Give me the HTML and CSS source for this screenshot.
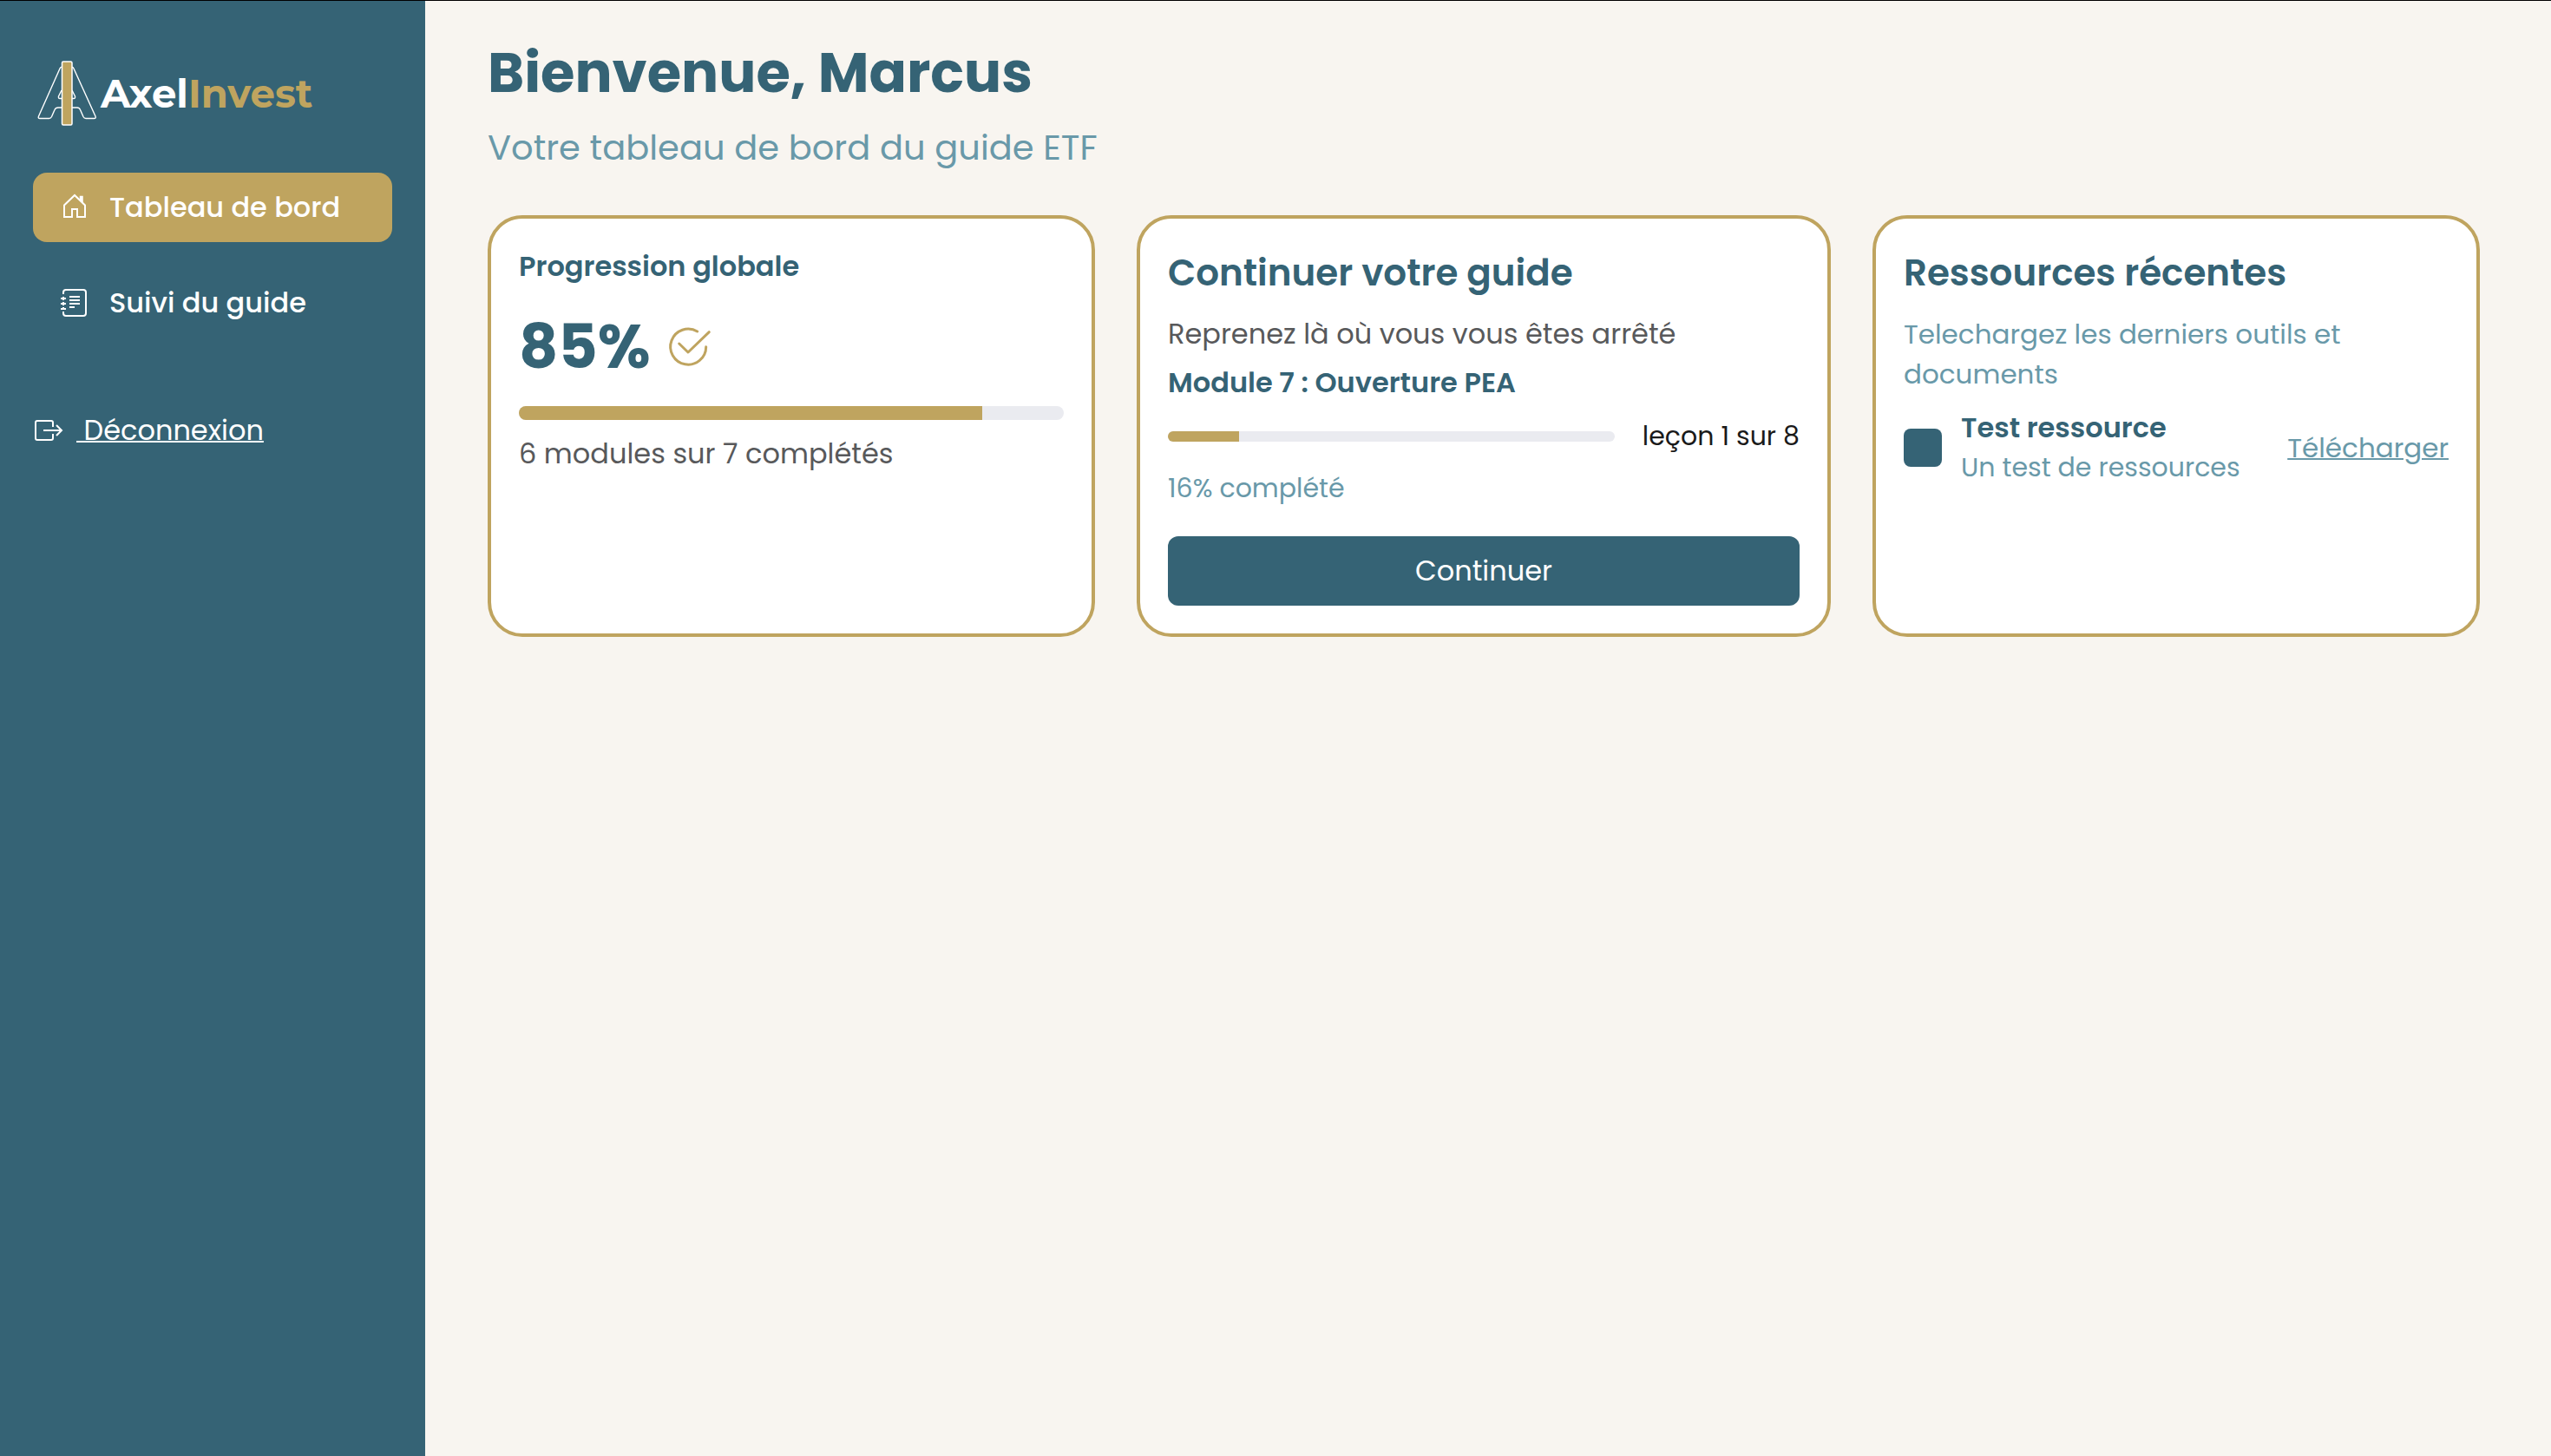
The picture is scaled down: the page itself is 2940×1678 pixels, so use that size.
FILE: index.html
```html
<!DOCTYPE html>
<html lang="fr">
<head>
  <meta charset="utf-8">
  <meta name="viewport" content="width=device-width, initial-scale=1">
  <title>AxelInvest</title>
  <link rel="stylesheet" href="styles.css">
</head>
<body>
  <div class="app">
    <aside class="sidebar">
      <a class="logo" href="#">
        <svg class="logo-mark" viewBox="0 0 72 78" fill="none" aria-hidden="true">
          <g stroke="#fff" stroke-width="1.4" stroke-linejoin="round">
            <path d="M29 8.500Q28 8 27 10L2.500 65Q1.500 67.500 4 67.500H14.500Q16.500 67.500 17.500 65.500L21 57.500Q22 55 25 55H47Q49.500 55 50.500 57.500L54 65.500Q55 67.500 57 67.500H66.500Q69 67.500 68 65L43 10Q42 8 41 8.500"/>
            <path d="M29 35L25.500 42Q25 44.500 27 44.500H43Q45 44.500 44.500 42L41 35"/>
          </g>
          <rect x="29.500" y="2" width="11.500" height="73" rx="1.500" fill="#bfa45f" stroke="#fff" stroke-width="1.500"/>
        </svg>
        <span class="logo-text">Axel<span class="logo-accent">Invest</span></span>
      </a>
      <nav class="nav">
        <a class="nav-item nav-item-active" href="#">
          <svg class="icon" viewBox="0 0 32 32" fill="none" stroke="#fff" stroke-width="2" aria-hidden="true">
            <path d="M4 27V13.500L16 2L28 13.500V27H19V18H13V27Z"/>
            <path d="M22.500 3.500H25V10L22.500 7.500Z" fill="#fff" stroke-width="1.500"/>
          </svg>
          Tableau de bord
        </a>
        <a class="nav-item" href="#">
          <svg class="icon" viewBox="0 0 32 32" fill="none" stroke="#fff" stroke-width="2" aria-hidden="true">
            <path d="M3 6V4Q3 1 6 1H26Q29 1 29 4V28Q29 31 26 31H6Q3 31 3 28V26M3 9V13M3 15V19M3 21V24M0 11H6M0 17H6M0 23H6M10 9H22M10 13H22M10 17H22M10 21H16"/>
          </svg>
          Suivi du guide
        </a>
      </nav>
      <a class="logout" href="#">
        <svg class="icon" viewBox="0 0 32 32" fill="none" stroke="#fff" stroke-width="2" aria-hidden="true">
          <path d="M21 12V7Q21 5 19 5H3Q1 5 1 7V25Q1 27 3 27H19Q21 27 21 25V20M10 16H31M25 10L31 16L25 22"/>
        </svg>
        <span class="logout-label">&nbsp;Déconnexion</span>
      </a>
    </aside>

    <main class="main">
      <header class="welcome">
        <h1 class="welcome-title">Bienvenue, Marcus</h1>
        <p class="welcome-subtitle">Votre tableau de bord du guide ETF</p>
      </header>

      <div class="cards">
        <section class="card">
          <h2 class="label-strong">Progression globale</h2>
          <div class="score">
            <span class="score-value">85%</span>
            <svg class="score-icon" viewBox="0 0 52 52" fill="none" stroke="#bfa45f" stroke-width="3" stroke-linecap="round" stroke-linejoin="round" aria-hidden="true">
              <path d="M35.700 8A20.500 20.500 0 1 0 45.700 25.700M14.700 22L25 32L49.300 8.700"/>
            </svg>
          </div>
          <div class="bar bar-large" role="progressbar" aria-label="Progression globale" aria-valuenow="85" aria-valuemin="0" aria-valuemax="100">
            <div class="bar-fill" style="width: 85%"></div>
          </div>
          <p class="text-gray modules">6 modules sur 7 complétés</p>
        </section>

        <section class="card">
          <h2 class="card-title">Continuer votre guide</h2>
          <p class="text-gray">Reprenez là où vous vous êtes arrêté</p>
          <p class="label-strong module-name">Module 7 : Ouverture PEA</p>
          <div class="lesson">
            <div class="bar" role="progressbar" aria-label="Module 7" aria-valuenow="16" aria-valuemin="0" aria-valuemax="100">
              <div class="bar-fill" style="width: 16%"></div>
            </div>
            <span class="lesson-count">leçon 1 sur 8</span>
          </div>
          <p class="text-light text-small">16% complété</p>
          <button class="button" type="button">Continuer</button>
        </section>

        <section class="card">
          <h2 class="card-title">Ressources récentes</h2>
          <p class="text-light">Telechargez les derniers outils et documents</p>
          <div class="resource">
            <span class="resource-thumb"></span>
            <div class="resource-body">
              <h3 class="label-strong">Test ressource</h3>
              <p class="text-light text-small">Un test de ressources</p>
            </div>
            <a class="download text-light" href="#">Télécharger</a>
          </div>
        </section>
      </div>
    </main>
  </div>
</body>
</html>
```
FILE: styles.css
```css
:root {
  --blue: #356375;
  --blue-light: #6999a9;
  --gold: #bfa45f;
  --cream: #f8f5f0;
  --gray: #58595b;
}

* {
  box-sizing: border-box;
}

body {
  margin: 0;
  background: var(--cream);
  color: #1a1a1a;
  font-family: Poppins, Inter, "Open Sans", sans-serif;
  font-size: 32px;
  line-height: 46px;
}

h1,
h2,
h3,
p {
  margin: 0;
}

.app {
  display: flex;
  min-height: 100vh;
  border-top: 1px solid #000;
}

.sidebar {
  flex: none;
  width: 490px;
  padding: 68px 38px;
  background: var(--blue);
}

.logo {
  display: flex;
  align-items: center;
  gap: 2px;
  padding-left: 4px;
  color: #fff;
  text-decoration: none;
}

.logo-mark {
  width: 72px;
  height: 78px;
}

.logo-text {
  font-family: Montserrat, Inter, sans-serif;
  font-size: 45px;
  font-weight: 700;
}

.logo-accent {
  color: var(--gold);
}

.nav {
  display: flex;
  flex-direction: column;
  gap: 30px;
  margin: 52px 0 84px;
}

.nav-item {
  display: flex;
  align-items: center;
  gap: 24px;
  height: 80px;
  padding: 0 32px;
  border-radius: 16px;
  color: #fff;
  font-weight: 500;
  text-decoration: none;
  white-space: nowrap;
}

.nav-item-active {
  background: var(--gold);
}

.icon {
  flex: none;
  width: 32px;
  height: 32px;
  overflow: visible;
}

.logout {
  display: flex;
  align-items: center;
  gap: 16px;
  padding-left: 2px;
  color: #fff;
  text-decoration: none;
}

.logout-label {
  text-decoration: underline;
  text-decoration-thickness: 2px;
}

.main {
  flex: 1;
  padding: 35px 82px 35px 72px;
}

.welcome {
  display: flex;
  flex-direction: column;
  gap: 8px;
  margin-bottom: 48px;
  color: var(--blue);
}

.welcome-title {
  font-size: 64px;
  font-weight: 700;
  line-height: 96px;
}

.welcome-subtitle {
  color: var(--blue-light);
  font-size: 40px;
  line-height: 60px;
}

.cards {
  display: grid;
  grid-template-columns: 7fr 8fr 7fr;
  gap: 48px;
}

.card {
  padding: 32px;
  border: 4px solid var(--gold);
  border-radius: 40px;
  background: #fff;
}

.card-title {
  margin-bottom: 16px;
  color: var(--blue);
  font-size: 42px;
  font-weight: 600;
  line-height: 62px;
}

.label-strong {
  color: var(--blue);
  font-size: 32px;
  font-weight: 600;
}

.text-gray {
  color: var(--gray);
}

.text-light {
  color: var(--blue-light);
  font-size: 31px;
}

.text-small,
.lesson-count {
  font-size: 30px;
}

.score {
  display: flex;
  align-items: center;
  gap: 18px;
  margin: 18px 0 16px;
  color: var(--blue);
}

.score-value {
  font-size: 70px;
  font-weight: 700;
  line-height: 104px;
}

.score-icon {
  width: 52px;
  height: 52px;
}

.bar {
  flex: 1;
  height: 12px;
  border-radius: 8px;
  background: #eaebf0;
  overflow: hidden;
}

.bar-large {
  height: 16px;
}

.bar-fill {
  height: 100%;
  background: var(--gold);
}

.modules {
  margin-top: 16px;
}

.module-name {
  margin-top: 10px;
}

.lesson {
  display: flex;
  align-items: center;
  gap: 32px;
  margin: 16px 0 14px;
}

.button {
  display: block;
  width: 100%;
  height: 80px;
  margin-top: 32px;
  border: 0;
  border-radius: 12px;
  background: var(--blue);
  color: #fff;
  font: inherit;
}

.resource {
  display: flex;
  align-items: center;
  gap: 22px;
  margin-top: 16px;
}

.resource-thumb {
  flex: none;
  width: 44px;
  height: 44px;
  border-radius: 8px;
  background: var(--blue);
}

.resource-body {
  flex: 1;
}

.download {
  text-decoration-thickness: 2px;
}
```
